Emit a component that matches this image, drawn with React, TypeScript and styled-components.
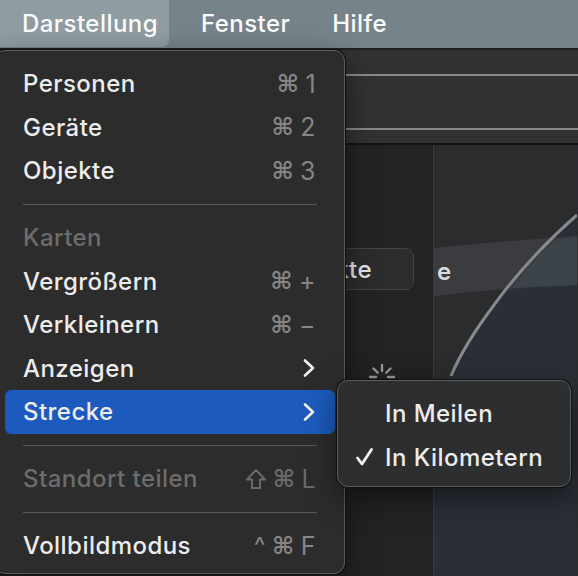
import React from "react";
import styled, { createGlobalStyle } from "styled-components";

const Global = createGlobalStyle`
  html, body { margin: 0; padding: 0; background: #2b2c2f; }
  body { font-family: Inter, "Noto Sans", "DejaVu Sans", sans-serif; -webkit-font-smoothing: antialiased; }
`;

const Screen = styled.div`
  position: relative;
  width: 578px;
  height: 576px;
  overflow: hidden;
  display: flex;
  flex-direction: column;
  background: #2b2c2f;
`;

const MenuBar = styled.div`
  height: 48px;
  flex: none;
  display: flex;
  align-items: stretch;
  background: #76848a;
  border-bottom: 2px solid #1e1f20;
  box-sizing: content-box;
`;

const BarItem = styled.div<{ $active?: boolean }>`
  display: flex;
  align-items: center;
  padding: ${(p) => (p.$active ? "0 11px 0 22px" : "0 21px")};
  margin-right: ${(p) => (p.$active ? "11px" : "0")};
  font-size: 24px;
  font-weight: 500;
  letter-spacing: 0.45px;
  color: #fbfbfb;
  background: ${(p) => (p.$active ? "#8f9ca1" : "transparent")};
  border-radius: 0 0 7px 0;
  height: 47px;
`;

const Toolbar = styled.div`
  height: 95px;
  flex: none;
  background: #323232;
  display: flex;
  flex-direction: column;
  padding-top: 24px;
  box-sizing: border-box;
  border-bottom: 2px solid #121212;
`;

const ToolLine = styled.div<{ $gap: number }>`
  height: 2px;
  background: #8a8a8a;
  margin-bottom: ${(p) => p.$gap}px;
`;

const Content = styled.div`
  flex: 1;
  display: flex;
  position: relative;
`;

const Sidebar = styled.div`
  width: 434px;
  flex: none;
  background: #222325;
  border-right: 1px solid #3a3b3d;
  position: relative;
  display: flex;
  flex-direction: column;
  align-items: flex-end;
  padding-top: 103px;
  box-sizing: border-box;
`;

const SideButton = styled.div`
  width: 110px;
  height: 42px;
  margin-right: 19px;
  border-radius: 9px;
  background: #2b2c2e;
  border: 1px solid #434446;
  box-sizing: border-box;
  color: #e6e6e6;
  font-size: 24px;
  font-weight: 500;
  letter-spacing: 0.45px;
  display: flex;
  align-items: center;
  justify-content: flex-end;
  padding-right: 41px;
  white-space: nowrap;
  overflow: hidden;
`;

const Spinner = styled.svg`
  position: absolute;
  left: 368px;
  top: 218px;
`;

const MapArea = styled.div`
  flex: 1;
  position: relative;
  overflow: hidden;
`;

const MapSvg = styled.svg`
  display: block;
`;

const MapLabel = styled.span`
  position: absolute;
  left: 3px;
  top: 112px;
  font-size: 24px;
  font-weight: 600;
  color: #dcdcdc;
`;

const Menu = styled.div`
  position: absolute;
  left: -6px;
  top: 50px;
  width: 351px;
  height: 524px;
  box-sizing: border-box;
  background: #2c2c2c;
  border: 1px solid #5c5c5c;
  box-shadow: 0 0 0 1px #101010, 0 10px 30px rgba(0, 0, 0, 0.5);
  border-radius: 11px;
  padding: 11px 0 7px;
  display: flex;
  flex-direction: column;
`;

const Row = styled.div<{ $hl?: boolean; $disabled?: boolean }>`
  height: 43.5px;
  flex: none;
  margin: 0 9px 0 10px;
  padding: 0 19px 0 18px;
  border-radius: 6px;
  display: flex;
  align-items: center;
  justify-content: space-between;
  font-size: 24px;
  font-weight: 500;
  letter-spacing: 0.45px;
  color: ${(p) => (p.$disabled ? "#6c6c6c" : "#ececec")};
  background: ${(p) => (p.$hl ? "#1c5bbd" : "transparent")};
`;

const Shortcut = styled.span<{ $disabled?: boolean }>`
  color: ${(p) => (p.$disabled ? "#6a6a6a" : "#858585")};
  font-size: 25px;
  font-weight: 400;
  display: flex;
  align-items: center;
  gap: 6px;
`;

const Cmd = styled.span`
  font-family: "DejaVu Sans", sans-serif;
  font-size: 24px;
  font-weight: 700;
`;

const Separator = styled.div`
  height: 23.5px;
  flex: none;
  display: flex;
  align-items: center;
  margin: 0 27px 0 28px;
  &::after {
    content: "";
    flex: 1;
    height: 1px;
    background: #575757;
  }
`;

const SubMenu = styled.div`
  position: absolute;
  left: 337px;
  top: 380px;
  width: 234px;
  height: 107px;
  box-sizing: border-box;
  background: #2d2e30;
  border: 1px solid #5d5e60;
  box-shadow: 0 0 0 1px #101010, 0 10px 30px rgba(0, 0, 0, 0.5);
  border-radius: 11px;
  padding: 10px 0 0;
  display: flex;
  flex-direction: column;
`;

const SubRow = styled.div`
  height: 44px;
  display: flex;
  align-items: center;
  font-size: 24px;
  font-weight: 500;
  letter-spacing: 0.45px;
  color: #ececec;
`;

const CheckSlot = styled.span`
  width: 47px;
  padding-left: 17px;
  box-sizing: border-box;
  display: flex;
  align-items: center;
  flex: none;
`;

const Chevron = () => (
  <svg width="14" height="20" viewBox="0 0 14 20">
    <path d="M3 2.5 L11 10 L3 17.5" fill="none" stroke="#f2f2f2" strokeWidth="2.6" strokeLinecap="round" strokeLinejoin="round" />
  </svg>
);

const CheckIcon = () => (
  <svg width="19" height="20" viewBox="0 0 19 20">
    <path d="M2.5 11 L7 17 L16.5 2.5" fill="none" stroke="#f2f2f2" strokeWidth="2.8" strokeLinecap="round" strokeLinejoin="round" />
  </svg>
);

const ShiftIcon = () => (
  <svg width="22" height="22" viewBox="0 0 22 22">
    <path d="M11 2 L20 11.5 L15 11.5 L15 20 L7 20 L7 11.5 L2 11.5 Z" fill="none" stroke="#6a6a6a" strokeWidth="2" strokeLinejoin="round" />
  </svg>
);

type Item =
  | { kind: "row"; label: string; keys?: React.ReactNode; disabled?: boolean; hl?: boolean; sub?: boolean }
  | { kind: "sep" };

const items: Item[] = [
  { kind: "row", label: "Personen", keys: <><Cmd>⌘</Cmd>1</> },
  { kind: "row", label: "Geräte", keys: <><Cmd>⌘</Cmd>2</> },
  { kind: "row", label: "Objekte", keys: <><Cmd>⌘</Cmd>3</> },
  { kind: "sep" },
  { kind: "row", label: "Karten", disabled: true },
  { kind: "row", label: "Vergrößern", keys: <><Cmd>⌘</Cmd>+</> },
  { kind: "row", label: "Verkleinern", keys: <><Cmd>⌘</Cmd>−</> },
  { kind: "row", label: "Anzeigen", sub: true },
  { kind: "row", label: "Strecke", sub: true, hl: true },
  { kind: "sep" },
  { kind: "row", label: "Standort teilen", disabled: true, keys: <><ShiftIcon /><Cmd>⌘</Cmd>L</> },
  { kind: "sep" },
  { kind: "row", label: "Vollbildmodus", keys: <><span>^</span><Cmd>⌘</Cmd>F</> },
];

export default function App() {
  return (
    <>
      <Global />
      <Screen>
        <MenuBar>
          <BarItem $active>Darstellung</BarItem>
          <BarItem>Fenster</BarItem>
          <BarItem>Hilfe</BarItem>
        </MenuBar>
        <Toolbar>
          <ToolLine $gap={52} />
          <ToolLine $gap={0} />
        </Toolbar>
        <Content>
          <Sidebar>
            <SideButton>Objekte</SideButton>
            <Spinner width="28" height="28" viewBox="0 0 28 28">
              {Array.from({ length: 8 }).map((_, i) => {
                const a = (i * Math.PI) / 4;
                const x1 = 14 + Math.sin(a) * 6;
                const y1 = 14 - Math.cos(a) * 6;
                const x2 = 14 + Math.sin(a) * 12;
                const y2 = 14 - Math.cos(a) * 12;
                return <line key={i} x1={x1} y1={y1} x2={x2} y2={y2} stroke="#9a9a9a" strokeWidth="2.4" strokeLinecap="round" />;
              })}
            </Spinner>
          </Sidebar>
          <MapArea>
            <MapSvg width="143" height="429" viewBox="0 0 143 429">
              <rect width="143" height="429" fill="#2b2c2e" />
              <path d="M143 70 Q90 120 60 160 Q10 230 -60 429 L143 429 Z" fill="#2a2e36" />
              <path d="M0 103 Q70 96 143 91 L143 140 Q70 143 0 151 Z" fill="#3a3c3f" />
              <path d="M143 91 L143 140 Q110 141 78 143 Q98 116 120 98 Q130 93 143 91 Z" fill="#3d434b" />
              <path d="M143 70 Q95 112 60 160 Q30 200 17 231" fill="none" stroke="#87898c" strokeWidth="3" />
            </MapSvg>
            <MapLabel>e</MapLabel>
          </MapArea>
        </Content>

        <Menu>
          {items.map((it, i) =>
            it.kind === "sep" ? (
              <Separator key={i} />
            ) : (
              <Row key={i} $hl={it.hl} $disabled={it.disabled}>
                <span>{it.label}</span>
                {it.sub ? <Chevron /> : it.keys ? <Shortcut $disabled={it.disabled}>{it.keys}</Shortcut> : null}
              </Row>
            )
          )}
        </Menu>

        <SubMenu>
          <SubRow>
            <CheckSlot />
            In Meilen
          </SubRow>
          <SubRow>
            <CheckSlot>
              <CheckIcon />
            </CheckSlot>
            In Kilometern
          </SubRow>
        </SubMenu>
      </Screen>
    </>
  );
}
